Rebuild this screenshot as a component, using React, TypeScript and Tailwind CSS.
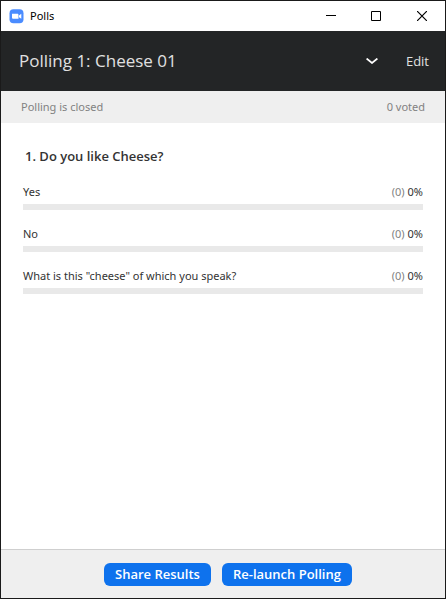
import { useState } from "react";

interface PollOption {
  label: string;
  votes: number;
  percent: number;
}

interface Poll {
  title: string;
  question: string;
  voted: number;
  options: PollOption[];
}

const poll: Poll = {
  title: "Polling 1: Cheese 01",
  question: "1. Do you like Cheese?",
  voted: 0,
  options: [
    { label: "Yes", votes: 0, percent: 0 },
    { label: "No", votes: 0, percent: 0 },
    { label: 'What is this "cheese" of which you speak?', votes: 0, percent: 0 },
  ],
};

function ZoomLogo() {
  return (
    <svg width="15" height="15" viewBox="0 0 15 15" aria-hidden="true">
      <rect x=".5" y=".3" width="14" height="14" rx="4" fill="#4a8cff" />
      <path
        d="M3 4.8h5.2c.8 0 1.3.5 1.3 1.3v3.7H4.3c-.8 0-1.3-.5-1.3-1.3zM10 6.4l2.3-1.6v5L10 8.3z"
        fill="#fff"
      />
    </svg>
  );
}

function TitleBar() {
  return (
    <div className="flex h-[30px] items-center bg-white pl-2">
      <ZoomLogo />
      <span className="ml-1.5 flex-1 text-[11px] leading-4 text-black">Polls</span>
      <button type="button" aria-label="Minimize" className="flex h-full w-[45px] items-center justify-center">
        <svg width="10" height="10" viewBox="0 0 10 10" shapeRendering="crispEdges">
          <path d="M0 4h10v1H0z" fill="#000" />
        </svg>
      </button>
      <button type="button" aria-label="Maximize" className="flex h-full w-[45px] items-center justify-center">
        <svg width="10" height="10" viewBox="0 0 10 10">
          <path d="M.5.5h9v9h-9z" fill="none" stroke="#000" />
        </svg>
      </button>
      <button type="button" aria-label="Close" className="flex h-full w-[47px] items-center justify-center pl-px">
        <svg width="10" height="10" viewBox="0 0 10 10">
          <path d="M0 0l10 10M10 0L0 10" fill="none" stroke="#000" strokeWidth="1.2" />
        </svg>
      </button>
    </div>
  );
}

function ResultRow({ option }: { option: PollOption }) {
  return (
    <li>
      <div className="flex justify-between text-[11px] leading-4 text-[#333]">
        <span>{option.label}</span>
        <span>
          <span className="text-[#828282]">({option.votes})</span> {option.percent}%
        </span>
      </div>
      <div className="mt-1 h-1.5 bg-[#e9e9e9]">
        <div className="h-full bg-[#0e72ed]" style={{ width: `${option.percent}%` }} />
      </div>
    </li>
  );
}

export default function App() {
  const [open, setOpen] = useState(false);

  return (
    <div className="flex min-h-screen flex-col border border-[#1a1a1a] bg-white font-['Noto_Sans','Open_Sans',sans-serif]">
      <TitleBar />

      <header className="flex h-[60px] items-center bg-[#232526] pr-4 pl-[18px] font-['Open_Sans','Noto_Sans',sans-serif] text-[#e0e0e0]">
        <h1 className="flex-1 text-[17px] leading-6">{poll.title}</h1>
        <button
          type="button"
          aria-label="Choose poll"
          aria-expanded={open}
          onClick={() => setOpen(!open)}
          className="mr-7"
        >
          <svg width="12" height="6" viewBox="0 0 12 6" className="block">
            <path d="M.6.5L6 5 11.4.5" fill="none" stroke="#fff" strokeWidth="1.7" />
          </svg>
        </button>
        <button type="button" className="text-[13px] leading-5">
          Edit
        </button>
      </header>

      <div className="flex h-8 items-center justify-between bg-[#efefef] px-5 text-[11px] text-[#828282]">
        <span>Polling is closed</span>
        <span>{poll.voted} voted</span>
      </div>

      <main className="flex-1 px-[22px] pt-[23px]">
        <h2 className="pl-0.5 font-['Open_Sans','Noto_Sans',sans-serif] text-[13px] leading-5 font-semibold text-[#333]">
          {poll.question}
        </h2>
        <ul className="mt-[18px] flex flex-col gap-4">
          {poll.options.map((option) => (
            <ResultRow key={option.label} option={option} />
          ))}
        </ul>
      </main>

      <footer className="flex h-[49px] items-center justify-center gap-[11px] border-t border-[#cfcfcf] bg-[#efefef] pl-2.5 font-['Open_Sans','Noto_Sans',sans-serif]">
        <button type="button" className="h-[23px] rounded-md bg-[#0e72ed] px-[11px] text-[13px] leading-5 font-semibold text-white">
          Share Results
        </button>
        <button type="button" className="h-[23px] rounded-md bg-[#0e72ed] px-[11px] text-[13px] leading-5 font-semibold text-white">
          Re-launch Polling
        </button>
      </footer>
    </div>
  );
}
